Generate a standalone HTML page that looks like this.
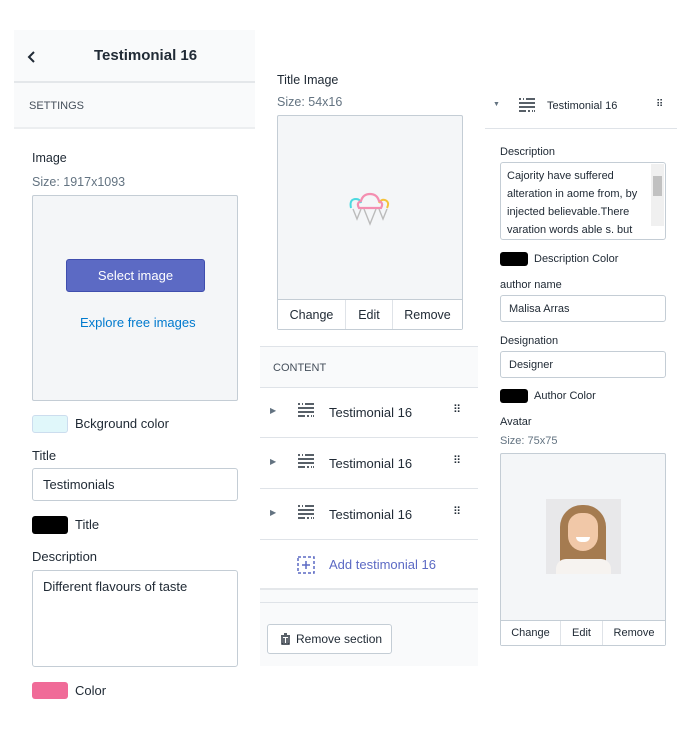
<!DOCTYPE html>
<html><head><meta charset="utf-8"><style>
*{box-sizing:border-box;margin:0;padding:0}
body{width:693px;height:750px;background:#fff;font-family:"Liberation Sans",sans-serif;font-size:12.5px;color:#212b36;position:relative;overflow:hidden}
.a{position:absolute}
.lbl{position:absolute;white-space:nowrap}
.gray{color:#637381}
.box{position:absolute;background:#f4f6f8;border:1px solid #c4cdd5;border-radius:2px}
.inp{position:absolute;border:1px solid #c4cdd5;border-radius:3px;background:#fff;padding-left:10px;display:flex;align-items:center}
.sw{position:absolute;border-radius:3px}
.btns{position:absolute;left:0;right:0;bottom:0;display:flex;border-top:1px solid #c4cdd5;background:#fff}
.btns div{display:flex;align-items:center;justify-content:center;border-right:1px solid #dfe3e8;color:#212b36}
.btns div:last-child{border-right:none}
.row{position:absolute;left:260px;width:218px;height:51px;border-bottom:1px solid #dfe3e8;background:#fff}
</style></head><body>
<div class="a" style="left:14px;top:30px;width:241px;height:98px;background:#f9fafb"></div>
<div class="a" style="left:14px;top:81px;width:241px;height:2px;background:#e4e7ea"></div>
<div class="a" style="left:14px;top:127px;width:241px;height:2px;background:#eceef0"></div>
<svg class="a" style="left:26px;top:50px" width="12" height="14"><path d="M8 2 L3 7 L8 12" stroke="#212b36" stroke-width="2" fill="none"/></svg>
<div class="lbl" style="left:94px;top:47px;font-size:15px;font-weight:bold">Testimonial 16</div>
<div class="lbl" style="left:29px;top:100px;font-size:11px;color:#454f5b">SETTINGS</div>
<div class="lbl" style="left:32px;top:151px">Image</div>
<div class="lbl gray" style="left:32px;top:175px">Size: 1917x1093</div>
<div class="box" style="left:32px;top:195px;width:206px;height:206px"></div>
<div class="a" style="left:66px;top:259px;width:139px;height:33px;background:#5c6ac4;border:1px solid #3f4eae;border-radius:3px;color:#fff;font-size:13px;display:flex;align-items:center;justify-content:center">Select image</div>
<div class="lbl" style="left:80px;top:315px;color:#007ace;font-size:13px">Explore free images</div>
<div class="sw" style="left:32px;top:415px;width:36px;height:18px;background:#e0f7fa;border:1px solid #cde"></div>
<div class="lbl" style="left:75px;top:416px;font-size:13px">Bckground color</div>
<div class="lbl" style="left:32px;top:448px;font-size:13px">Title</div>
<div class="inp" style="left:32px;top:468px;width:206px;height:33px;font-size:13px">Testimonials</div>
<div class="sw" style="left:32px;top:516px;width:36px;height:18px;background:#000"></div>
<div class="lbl" style="left:75px;top:517px;font-size:13px">Title</div>
<div class="lbl" style="left:32px;top:549px;font-size:13px">Description</div>
<div class="inp" style="left:32px;top:570px;width:206px;height:97px;align-items:flex-start;padding-top:8px;font-size:13px">Different flavours of taste</div>
<div class="sw" style="left:32px;top:682px;width:36px;height:17px;background:#f06b98"></div>
<div class="lbl" style="left:75px;top:683px;font-size:13px">Color</div>

<div class="lbl" style="left:277px;top:73px">Title Image</div>
<div class="lbl gray" style="left:277px;top:95px">Size: 54x16</div>
<div class="box" style="left:277px;top:115px;width:186px;height:215px">
<svg class="a" style="left:69px;top:75px" width="46" height="36" viewBox="0 0 46 36">
<path d="M4 17 Q2 8 9 8 Q13 8 14 12" stroke="#4dd9e0" stroke-width="2" fill="none"/>
<path d="M32 12 Q34 8 38 9 Q43 11 40 17" stroke="#f5c23a" stroke-width="2" fill="none"/>
<path d="M12 17 Q9 12 14 10 Q16 3 23 3 Q30 3 32 10 Q37 12 34 17 Z" stroke="#f48fb1" stroke-width="2.2" fill="none"/>
<path d="M6 18 L10 28 L14 18 M17 18 L23 33 L29 18 M32 18 L36 28 L40 18" stroke="#bbb" stroke-width="1.4" fill="none"/>
</svg>
<div class="btns" style="height:30px"><div style="width:68px">Change</div><div style="width:47px">Edit</div><div style="flex:1">Remove</div></div>
</div>
<div class="a" style="left:260px;top:346px;width:218px;height:320px;background:#f9fafb;border-top:1px solid #dfe3e8"></div>
<div class="lbl" style="left:273px;top:362px;font-size:11px;color:#454f5b">CONTENT</div>
<div class="row" style="top:387px;border-top:1px solid #dfe3e8"></div>
<div class="row" style="top:438px"></div>
<div class="row" style="top:489px"></div>
<div class="row" style="top:540px;height:50px;border-bottom:2px solid #e4e7ea"></div>
<div class="a" style="left:260px;top:602px;width:218px;height:1px;background:#dfe3e8"></div>
<div class="lbl" style="left:270px;top:406px;font-size:8px;color:#637381">▶</div>
<div class="lbl" style="left:270px;top:457px;font-size:8px;color:#637381">▶</div>
<div class="lbl" style="left:270px;top:508px;font-size:8px;color:#637381">▶</div>
<svg class="a" style="left:297px;top:403px" width="18" height="16"><path d="M1 1h2M5 1h1M8 1h9M1 5h16M1 9h16M1 13h7M10 13h2M14 13h1M16 13h1" stroke="#212b36" stroke-width="1.6"/></svg>
<svg class="a" style="left:297px;top:454px" width="18" height="16"><path d="M1 1h2M5 1h1M8 1h9M1 5h16M1 9h16M1 13h7M10 13h2M14 13h1M16 13h1" stroke="#212b36" stroke-width="1.6"/></svg>
<svg class="a" style="left:297px;top:505px" width="18" height="16"><path d="M1 1h2M5 1h1M8 1h9M1 5h16M1 9h16M1 13h7M10 13h2M14 13h1M16 13h1" stroke="#212b36" stroke-width="1.6"/></svg>
<div class="lbl" style="left:329px;top:405px;font-size:13px">Testimonial 16</div>
<div class="lbl" style="left:329px;top:456px;font-size:13px">Testimonial 16</div>
<div class="lbl" style="left:329px;top:507px;font-size:13px">Testimonial 16</div>
<div class="lbl" style="left:453px;top:403px;font-size:11px;letter-spacing:-2px">⠿</div>
<div class="lbl" style="left:453px;top:454px;font-size:11px;letter-spacing:-2px">⠿</div>
<div class="lbl" style="left:453px;top:505px;font-size:11px;letter-spacing:-2px">⠿</div>
<svg class="a" style="left:297px;top:556px" width="18" height="18"><rect x="1" y="1" width="16" height="16" fill="none" stroke="#5c6ac4" stroke-width="1.5" stroke-dasharray="3 2"/><path d="M9 5v8M5 9h8" stroke="#5c6ac4" stroke-width="1.5"/></svg>
<div class="lbl" style="left:329px;top:557px;font-size:13px;color:#5c6ac4">Add testimonial 16</div>
<div class="a" style="left:267px;top:624px;width:125px;height:30px;background:#fff;border:1px solid #c4cdd5;border-radius:3px;display:flex;align-items:center;padding-left:12px;font-size:12px;white-space:nowrap">
<svg width="11" height="12" style="margin-right:5px;flex:none"><path d="M4 1h3M1 3h9M2 4v7h7V4M4 5v5M7 5v5" stroke="#212b36" stroke-width="1.4" fill="none"/></svg>Remove section</div>

<div class="a" style="left:485px;top:128px;width:192px;height:1px;background:#dfe3e8"></div>
<div class="lbl" style="left:493px;top:101px;font-size:7px;color:#637381">▼</div>
<svg class="a" style="left:518px;top:98px" width="18" height="16"><path d="M1 1h2M5 1h1M8 1h9M1 5h16M1 9h16M1 13h7M10 13h2M14 13h1M16 13h1" stroke="#212b36" stroke-width="1.6"/></svg>
<div class="lbl" style="left:547px;top:100px;font-size:11px">Testimonial 16</div>
<div class="lbl" style="left:656px;top:99px;font-size:10px;letter-spacing:-2px">⠿</div>
<div class="lbl" style="left:500px;top:146px;font-size:11px">Description</div>
<div class="inp" style="left:500px;top:162px;width:166px;height:78px;align-items:flex-start;padding:4px 16px 0 6px;font-size:11px;line-height:18px;overflow:hidden">Cajority have suffered alteration in aome from, by injected believable.There varation words able s. but also</div>
<div class="a" style="left:651px;top:164px;width:13px;height:62px;background:#f0f0f0"><div style="margin:12px 2px 0;height:20px;background:#c1c1c1"></div></div>
<div class="sw" style="left:500px;top:252px;width:28px;height:14px;background:#000"></div>
<div class="lbl" style="left:534px;top:253px;font-size:11px">Description Color</div>
<div class="lbl" style="left:500px;top:279px;font-size:11px">author name</div>
<div class="inp" style="left:500px;top:295px;width:166px;height:27px;padding-left:8px;font-size:11px">Malisa Arras</div>
<div class="lbl" style="left:500px;top:335px;font-size:11px">Designation</div>
<div class="inp" style="left:500px;top:351px;width:166px;height:27px;padding-left:8px;font-size:11px">Designer</div>
<div class="sw" style="left:500px;top:389px;width:28px;height:14px;background:#000"></div>
<div class="lbl" style="left:534px;top:390px;font-size:11px">Author Color</div>
<div class="lbl" style="left:500px;top:416px;font-size:11px">Avatar</div>
<div class="lbl gray" style="left:500px;top:435px;font-size:11px">Size: 75x75</div>
<div class="box" style="left:500px;top:453px;width:166px;height:193px">
<div class="a" style="left:45px;top:45px;width:75px;height:75px;background:#e8e8ea;overflow:hidden">
<div class="a" style="left:14px;top:6px;width:46px;height:72px;background:#a57b50;border-radius:22px 22px 4px 4px"></div>
<div class="a" style="left:22px;top:14px;width:30px;height:38px;background:#f1c8a8;border-radius:14px 14px 16px 16px"></div>
<div class="a" style="left:30px;top:38px;width:14px;height:5px;background:#fff;border-radius:0 0 6px 6px"></div>
<div class="a" style="left:10px;top:60px;width:55px;height:20px;background:#f6f3f0;border-radius:10px 10px 0 0"></div>
</div>
<div class="btns" style="height:25px;font-size:11px"><div style="width:60px">Change</div><div style="width:42px">Edit</div><div style="flex:1">Remove</div></div>
</div>
</body></html>
